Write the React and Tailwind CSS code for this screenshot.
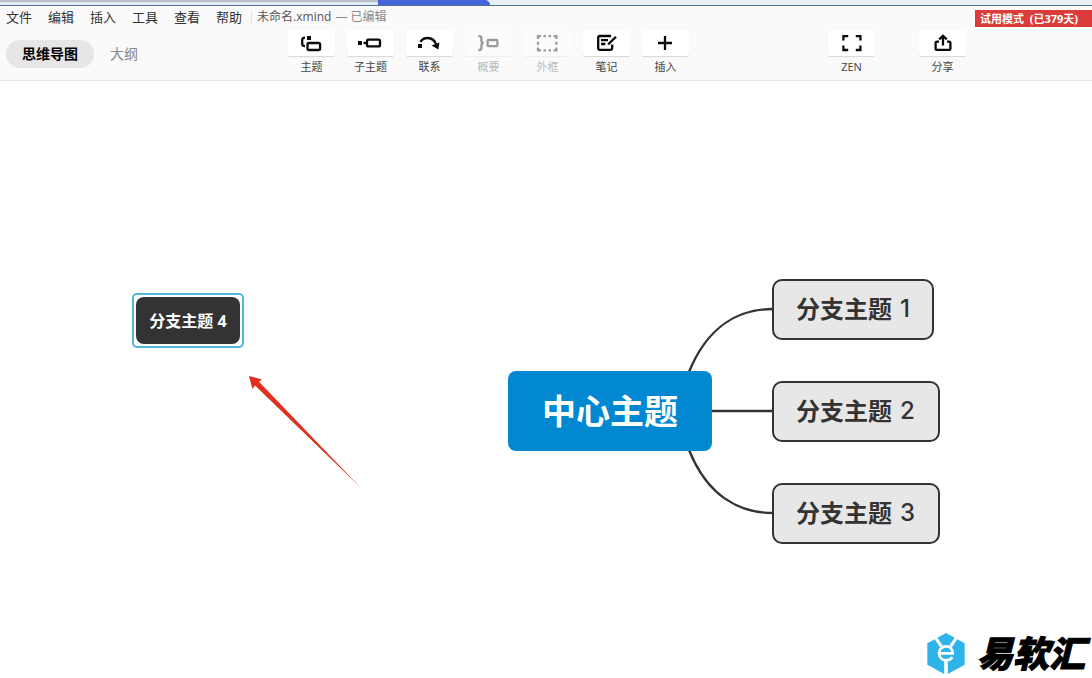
const INK = '#0a0a0a';
const MUTED = '#9a9a9a';

function Icon({ color = INK, children }) {
  return (
    <svg width="25" height="24" viewBox="0 0 25 24" fill="none" stroke={color} strokeWidth="2.3" aria-hidden="true">
      {children}
    </svg>
  );
}

const TopicIcon = () => (
  <Icon>
    <rect x="8" y="5" width="4" height="4" fill={INK} stroke="none" />
    <path d="M6 6.6C4 6.6 3.2 7.2 3.2 9V12.5C3.2 14.4 4 15.2 6 15.2" />
    <rect x="8.5" y="12" width="12.6" height="7" rx="1.5" />
  </Icon>
);

const SubtopicIcon = () => (
  <Icon>
    <rect x="0" y="10" width="4" height="4" fill={INK} stroke="none" />
    <path d="M5.5 12H9" />
    <rect x="9" y="8.6" width="13" height="6.8" rx="1.5" />
  </Icon>
);

const RelationIcon = () => (
  <Icon>
    <rect x="1" y="13" width="4" height="4" fill={INK} stroke="none" />
    <path d="M3.4 10.8C5.2 8.2 7.6 7 10.6 7C15.2 7 18.2 10 19.6 14.5" />
    <path d="M22.4 11.4L21.4 18.4L14.6 14.4Z" fill={INK} stroke="none" />
  </Icon>
);

const SummaryIcon = () => (
  <Icon color={MUTED}>
    <path d="M2.4 5.2H3.4C5 5.2 5.4 6 5.4 7.2V9.6C5.4 11.2 6 12.1 7.8 12.1C6 12.1 5.4 13 5.4 14.6V17C5.4 18.2 5 19 3.4 19H2.4" />
    <rect x="11.6" y="9" width="9.8" height="6.2" rx="1" />
  </Icon>
);

const BoundaryIcon = () => (
  <Icon color={MUTED}>
    <path d="M3 8V5.2H6M8.5 5.2H11M13.5 5.2H16M18.5 5.2H21.4V8M21.4 10.7V13.7M21.4 16.4V19.3H18.5M16 19.3H13.5M11 19.3H8.5M6 19.3H3V16.4M3 13.7V10.7" />
  </Icon>
);

const NoteIcon = () => (
  <Icon>
    <path d="M17 5H6C4.8 5 4.2 5.6 4.2 6.8V17C4.2 18.2 4.8 18.8 6 18.8H16.4C17.6 18.8 18.2 18.2 18.2 17V13.4" />
    <path d="M7 9.2H14M7 13H11.4" />
    <path d="M22 5.8L14.2 13.4" />
  </Icon>
);

const PlusIcon = () => (
  <Icon>
    <path d="M12 5V19M5 12H19" />
  </Icon>
);

const ZenIcon = () => (
  <Icon>
    <path d="M4.4 9.6V5.2H9.2M16.8 5.2H21.4V9.6M21.4 14.6V19H16.8M9.2 19H4.4V14.6" />
  </Icon>
);

const ShareIcon = () => (
  <Icon>
    <path d="M9 10.6H7C5.9 10.6 5.6 11 5.6 12V17.2C5.6 18.4 6.1 18.9 7.2 18.9H18.8C19.9 18.9 20.4 18.4 20.4 17.2V12C20.4 11 20.1 10.6 19 10.6H17" />
    <path d="M13 14.6V5M9.2 8.4L13 4.8L16.8 8.4" />
  </Icon>
);

function Tool({ label, icon, disabled = false }) {
  return (
    <button type="button" disabled={disabled} className="group flex w-[47px] flex-col items-center">
      <span className="flex h-[26px] w-full items-center justify-center rounded-xs bg-white shadow-[0_1px_1px_rgba(0,0,0,0.14)] group-disabled:bg-[#fcfcfc] group-disabled:shadow-[0_1px_1px_rgba(0,0,0,0.05)]">
        {icon}
      </span>
      <span className="mt-[3px] text-[11px] leading-4 text-[#444] group-disabled:text-[#bbb]">{label}</span>
    </button>
  );
}

const MENUS = ['文件', '编辑', '插入', '工具', '查看', '帮助'];

function Header() {
  return (
    <header className="border-b border-[#e4e4e4] bg-[#fafafa]">
      <div className="flex h-[6px] border-b border-[#4f7396] bg-[#e9f0f6]">
        <div className="w-[378px] border-t-2 border-[#b9bdc1] bg-[#dfeaf3]" />
        <div className="w-[112px] rounded-tr-lg bg-[#4565dc]" />
      </div>
      <div className="flex h-[22px] items-center">
        <nav className="flex gap-4 pl-[6px]">
          {MENUS.map((m) => (
            <button key={m} type="button" className="text-[13px] leading-5 text-[#333]">
              {m}
            </button>
          ))}
        </nav>
        <div className="ml-[9px] h-3 w-px bg-[#e2e2e2]" />
        <p className="ml-[5px] flex gap-1 text-[12px] leading-5 text-[#555]">
          <span>未命名.xmind</span>
          <span className="text-[#888]">— 已编辑</span>
        </p>
        <div className="mt-[3px] ml-auto w-[117px] bg-[#dc3c39] pl-[5px] text-[11px] leading-[17px] font-bold whitespace-pre text-white">
          试用模式  (已379天)
        </div>
      </div>
      <div className="flex h-[52px] items-start pt-[2px]">
        <div className="flex w-[288px] gap-4 pt-[10px] pl-[6px]">
          <button type="button" className="h-7 rounded-full bg-[#e6e6e6] px-4 text-[14px] leading-7 font-bold text-black">
            思维导图
          </button>
          <button type="button" className="h-7 text-[14px] leading-7 text-[#888]">
            大纲
          </button>
        </div>
        <div className="flex gap-3">
          <Tool label="主题" icon={<TopicIcon />} />
          <Tool label="子主题" icon={<SubtopicIcon />} />
          <Tool label="联系" icon={<RelationIcon />} />
          <Tool label="概要" icon={<SummaryIcon />} disabled />
          <Tool label="外框" icon={<BoundaryIcon />} disabled />
          <Tool label="笔记" icon={<NoteIcon />} />
          <Tool label="插入" icon={<PlusIcon />} />
        </div>
        <div className="mr-[126px] ml-auto flex gap-11">
          <Tool label="ZEN" icon={<ZenIcon />} />
          <Tool label="分享" icon={<ShareIcon />} />
        </div>
      </div>
    </header>
  );
}

function Branch({ n, className }) {
  return (
    <div
      className={`absolute left-[772px] flex h-[61px] items-center gap-2 rounded-[10px] border-2 border-[#333] bg-[#e7e7e7] pb-[2px] pl-[22px] text-[24px] leading-8 text-[#333] ${className}`}
    >
      <span className="font-bold">分支主题</span>
      <span className="font-['Inter'] font-medium">{n}</span>
    </div>
  );
}

function Brand() {
  return (
    <div className="absolute right-[7px] bottom-[2px] flex items-center gap-3">
      <svg width="38" height="42" viewBox="42 36 112 126" aria-hidden="true">
        <path d="M98 36L154 67V131L98 162L42 131V67Z" fill="#2fb4ea" />
        <g stroke="#fff" fill="none">
          <path d="M64 46L84 76M132 46L112 76" strokeWidth="9" />
          <path d="M98 114V164" strokeWidth="11" />
          <path d="M78 97H118C118 84 110 76 98 76C86 76 77 85 77 97C77 109 86 118 98 118C107 118 113 115 117 109" strokeWidth="8" />
        </g>
      </svg>
      <span className="text-[36px] leading-[44px] font-black text-black italic [-webkit-text-stroke:1px_black]">易软汇</span>
    </div>
  );
}

export default function App() {
  return (
    <div className="flex min-h-screen flex-col bg-white font-['Open_Sans','Noto_Sans_CJK_SC',sans-serif]">
      <Header />
      <main className="relative flex-1 overflow-hidden">
        <svg className="absolute top-0 left-0" width="1000" height="480" viewBox="0 81 1000 480" fill="none" aria-hidden="true">
          <g stroke="#333" strokeWidth="2.4">
            <path d="M689 372C708 325 740 309 773 309" />
            <path d="M711 411H773" />
            <path d="M689 450C708 497 740 513 773 513" />
          </g>
          <path d="M249 376L262 379.4L259 381.8L360 487L255 385.4L252.4 389Z" fill="#e0301f" />
        </svg>
        <div className="absolute top-[212px] left-[132px] rounded-[5px] border-2 border-[#55b5d8] p-[2px]">
          <div className="flex h-[47px] w-[104px] items-center justify-center rounded-lg bg-[#333] text-[16px] font-bold text-white">
            分支主题 4
          </div>
        </div>
        <div className="absolute top-[290px] left-[508px] flex h-20 w-[204px] items-center justify-center rounded-lg bg-[#0288d1] text-[34px] font-bold text-white">
          中心主题
        </div>
        <Branch n="1" className="top-[198px] w-[162px]" />
        <Branch n="2" className="top-[300px] w-[168px]" />
        <Branch n="3" className="top-[402px] w-[168px]" />
        <Brand />
      </main>
    </div>
  );
}
